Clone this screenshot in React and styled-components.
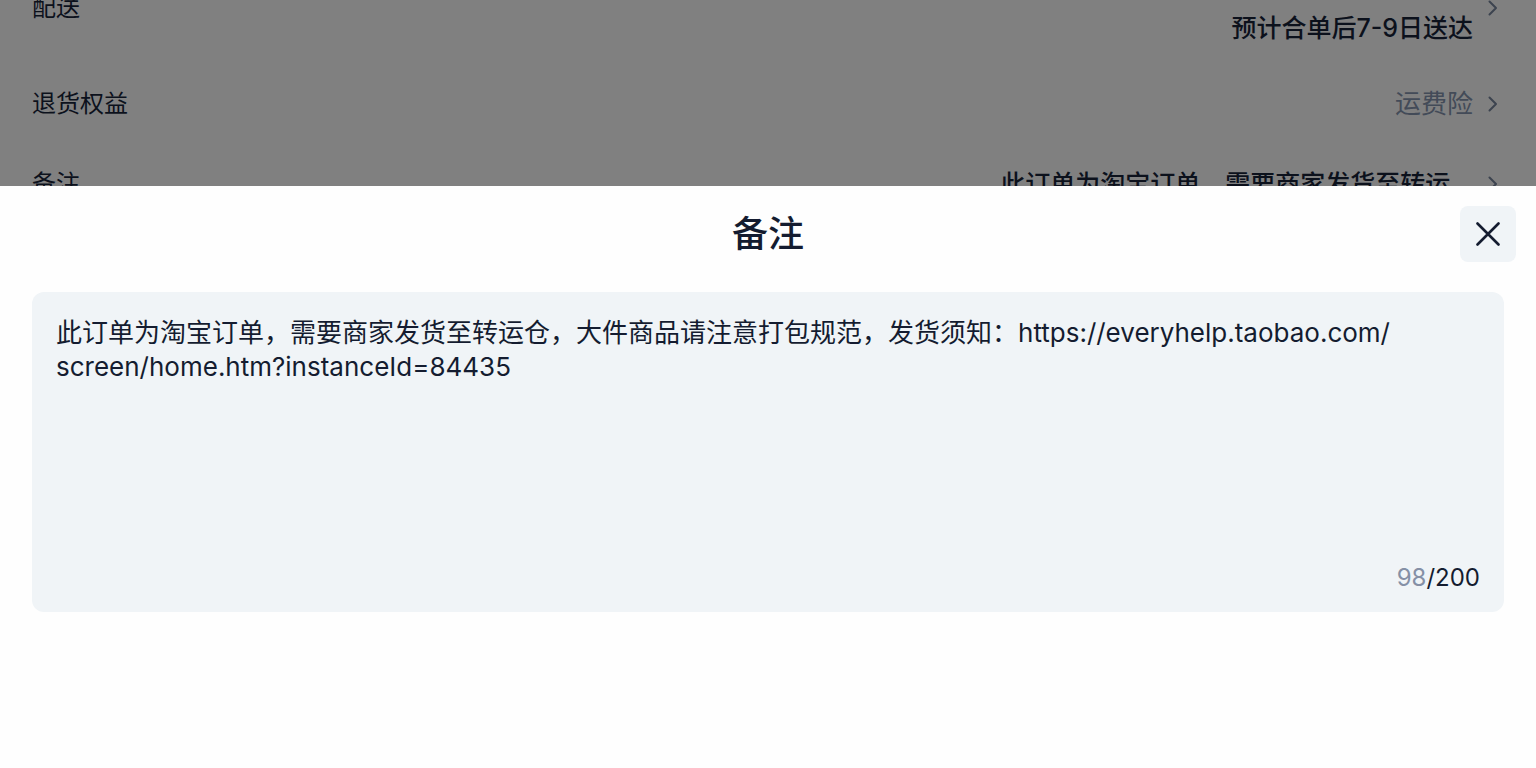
import React, { useState } from 'react';
import styled, { createGlobalStyle } from 'styled-components';

const MAX_LENGTH = 200;

const rows = [
  { id: 'delivery', label: '配送', value: '预计合单后7-9日送达', twoLine: true },
  { id: 'refund', label: '退货权益', value: '运费险', muted: true },
  { id: 'remark', label: '备注', value: '此订单为淘宝订单，需要商家发货至转运…' },
];

const initialRemark =
  '此订单为淘宝订单，需要商家发货至转运仓，大件商品请注意打包规范，发货须知：https://everyhelp.taobao.com/screen/home.htm?instanceId=84435';

const App = () => {
  const [remark, setRemark] = useState(initialRemark);
  const [count, setCount] = useState(98);

  const onChangeHandler = e => {
    setCount(count + e.target.value.length - remark.length);
    setRemark(e.target.value);
  };

  return (
    <Page>
      <GlobalStyle />
      <Order>
        <RowList>
          {rows.map(row => (
            <Row key={row.id}>
              <Label>{row.label}</Label>
              <Value $muted={row.muted} $twoLine={row.twoLine}>
                {row.value}
              </Value>
              <Chevron viewBox="0 0 10 16" aria-hidden="true">
                <path d="M1.5 1.5 8 8l-6.5 6.5" />
              </Chevron>
            </Row>
          ))}
        </RowList>
      </Order>
      <Sheet role="dialog" aria-labelledby="remark-title">
        <Header>
          <Title id="remark-title">备注</Title>
          <CloseButton type="button" aria-label="关闭">
            <svg viewBox="0 0 24 24" aria-hidden="true">
              <path d="M1.5 1.5l21 21M22.5 1.5l-21 21" />
            </svg>
          </CloseButton>
        </Header>
        <Field>
          <TextArea aria-labelledby="remark-title" spellCheck={false} value={remark} onChange={onChangeHandler} />
          <Counter>
            <Count>{count}</Count>/{MAX_LENGTH}
          </Counter>
        </Field>
      </Sheet>
    </Page>
  );
};

const GlobalStyle = createGlobalStyle`
  * {
    box-sizing: border-box;
  }

  body {
    margin: 0;
    color: #141c30;
    font-family: Inter, 'Noto Sans CJK SC', sans-serif;
  }
`;

const Page = styled.div`
  display: flex;
  flex-direction: column;
  height: 100vh;
  background-color: #fefefe;
`;

const Order = styled.main`
  flex: 1;
  min-height: 0;
  overflow: hidden;
  background-color: #808080;
  color: #0c111c;
`;

const RowList = styled.div`
  margin-top: -48px;
`;

const Row = styled.div`
  display: flex;
  align-items: center;
  min-height: 80px;
  padding: 16px 38px 16px 32px;
  line-height: 40px;
`;

const Label = styled.span`
  flex: 1;
  font-size: 24px;
`;

const Value = styled.span`
  padding-top: ${props => (props.$twoLine ? '40px' : '0')};
  color: ${props => (props.$muted ? '#434b58' : 'inherit')};
  font-size: ${props => (props.$muted ? '26px' : '25px')};
  font-weight: ${props => (props.$muted ? 400 : 500)};
`;

const Chevron = styled.svg`
  width: 10px;
  height: 16px;
  margin-left: 15px;
  fill: none;
  stroke: #3c434f;
  stroke-width: 2;
  stroke-linecap: round;
  stroke-linejoin: round;
`;

const Sheet = styled.section`
  padding-bottom: 156px;
  background-color: #fefefe;
`;

const Header = styled.header`
  display: grid;
  grid-template-columns: 1fr auto 1fr;
  align-items: center;
  padding: 20px 20px 30px;
`;

const Title = styled.h2`
  grid-column: 2;
  margin: 0;
  font-size: 36px;
  font-weight: 500;
  line-height: 56px;
`;

const CloseButton = styled.button`
  display: flex;
  align-items: center;
  justify-content: center;
  justify-self: end;
  width: 56px;
  height: 56px;
  padding: 0;
  border: none;
  border-radius: 8px;
  background-color: #f0f4f7;
  cursor: pointer;

  svg {
    width: 24px;
    height: 24px;
    fill: none;
    stroke: #141c30;
    stroke-width: 2.6;
    stroke-linecap: round;
  }
`;

const Field = styled.div`
  display: flex;
  flex-direction: column;
  height: 320px;
  margin: 0 32px;
  padding: 24px 24px 22px;
  border-radius: 12px;
  background-color: #f0f4f7;
`;

const TextArea = styled.textarea`
  flex: 1;
  width: 100%;
  padding: 0 84px 0 0;
  border: none;
  outline: none;
  resize: none;
  background: transparent;
  color: inherit;
  font-family: inherit;
  font-size: 26px;
  line-height: 34px;
  word-break: break-all;
`;

const Counter = styled.div`
  align-self: flex-end;
  font-size: 24px;
  line-height: 24px;
`;

const Count = styled.span`
  color: #8590a6;
`;

export default App;
